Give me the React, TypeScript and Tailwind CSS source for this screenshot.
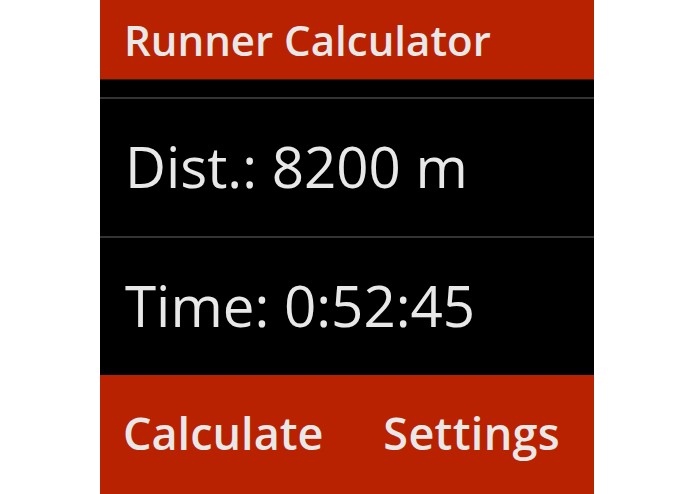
import React from 'react';

// Watch-style runner calculator screen
export default function App() {
  const rows = ['Dist.: 8200 m', 'Time: 0:52:45'];

  return (
    <div className="w-[695px] h-[494px] bg-white pl-[100px] font-['Open_Sans',sans-serif]">
      <div className="w-[494px] h-[494px] bg-black flex flex-col text-[#e8e8e8]">
        <div className="h-[80px] bg-[#b92200] border-b border-[#3a1a0c] flex items-center pl-[24px]">
          <span className="text-[42px] font-semibold leading-none">Runner Calculator</span>
        </div>
        <div className="h-[17px]" />
        {rows.map((r) => (
          <div key={r} className="h-[139px] border-t-2 border-[#333333] flex items-center pl-[25px]">
            <span className="text-[56.5px] leading-none">{r}</span>
          </div>
        ))}
        <div className="flex-1 bg-[#b92200] flex items-center justify-between pl-[23px] pr-[34px] pb-[4px]">
          <span className="text-[45px] font-semibold leading-none">Calculate</span>
          <span className="text-[45px] font-semibold leading-none tracking-[0.3px]">Settings</span>
        </div>
      </div>
    </div>
  );
}
